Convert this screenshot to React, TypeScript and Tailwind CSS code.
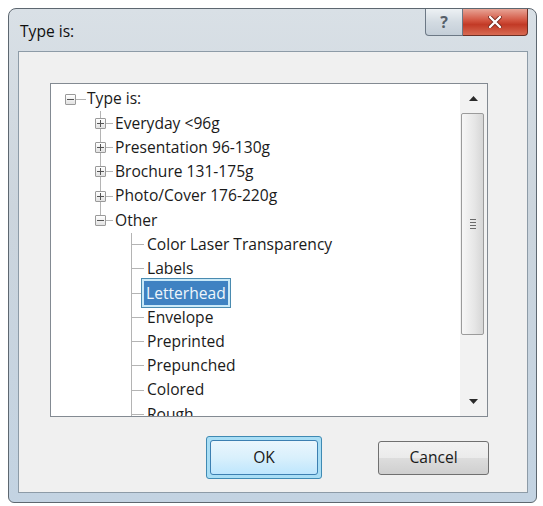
import React from 'react';

/** Tree rows under "Type is:", in display order. */
const PAPER_GROUPS = [
  'Everyday <96g',
  'Presentation 96-130g',
  'Brochure 131-175g',
  'Photo/Cover 176-220g',
];

const OTHER_TYPES = [
  'Color Laser Transparency',
  'Labels',
  'Letterhead',
  'Envelope',
  'Preprinted',
  'Prepunched',
  'Colored',
  'Rough',
];

const SELECTED = 'Letterhead';

function ExpandBox({ open }: { open: boolean }) {
  return (
    <span className="relative z-10 flex h-[11px] w-[11px] items-center justify-center rounded-[1px] border border-[#9a9a9a] bg-[linear-gradient(to_bottom,#ffffff,#e2e2e2)]">
      <svg width="7" height="7" viewBox="0 0 7 7">
        <rect x="0" y="3" width="7" height="1" fill="#555" />
        {!open && <rect x="3" y="0" width="1" height="7" fill="#555" />}
      </svg>
    </span>
  );
}

function GroupRow({ label, open, last }: { label: string; open: boolean; last: boolean }) {
  return (
    <div className="flex h-[24.25px] items-center">
      <div className="w-[44px] shrink-0" />
      <div className="relative flex h-full w-[11px] shrink-0 items-center">
        <div className={`absolute left-[5px] top-0 w-px bg-[#b4b4b4] ${last ? 'h-1/2' : 'h-full'}`} />
        <ExpandBox open={open} />
      </div>
      <div className="h-px w-[7px] bg-[#b4b4b4]" />
      <span className="ml-[2px]">{label}</span>
    </div>
  );
}

function LeafRow({ label }: { label: string }) {
  const selected = label === SELECTED;
  return (
    <div className="flex h-[24.25px] items-center">
      <div className="w-[80px] shrink-0" />
      <div className="h-full w-px shrink-0 bg-[#b4b4b4]" />
      <div className="h-px w-[12px] shrink-0 bg-[#b4b4b4]" />
      {selected ? (
        <span className="-ml-[3px] border border-[#4a8bb0] bg-[#c9e9f8] p-[2px]">
          <span className="block bg-[#3f82c2] px-[2px] py-[2px] leading-[20px] text-[#eef5fb]">
            {label}
          </span>
        </span>
      ) : (
        <span className="ml-[3px]">{label}</span>
      )}
    </div>
  );
}

function ScrollBar() {
  return (
    <div className="flex w-[27px] shrink-0 flex-col bg-[#f2f2f2]">
      <div className="flex h-[29px] items-center justify-center">
        <svg width="9" height="5" viewBox="0 0 9 5">
          <path d="M0 5 L4.5 0 L9 5 Z" fill="#2a2a2a" />
        </svg>
      </div>
      <div className="mx-[1px] flex h-[222px] w-[23px] items-center justify-center rounded-[2px] border border-[#9b9b9b] bg-[linear-gradient(to_right,#f7f7f7,#e6e6e6_60%,#d6d6d6)]">
        <div className="flex flex-col gap-[2px]">
          <div className="h-px w-[6px] bg-[#6a6a6a]" />
          <div className="h-px w-[6px] bg-[#6a6a6a]" />
          <div className="h-px w-[6px] bg-[#6a6a6a]" />
          <div className="h-px w-[6px] bg-[#6a6a6a]" />
        </div>
      </div>
      <div className="flex-1" />
      <div className="flex h-[29px] items-center justify-center">
        <svg width="9" height="5" viewBox="0 0 9 5">
          <path d="M0 0 L4.5 5 L9 0 Z" fill="#2a2a2a" />
        </svg>
      </div>
    </div>
  );
}

export default function App() {
  return (
    <div
      className="h-[506px] w-[543px] overflow-hidden bg-white pl-[8px] pt-[8px] text-[15.6px] text-[#1a1a1a]"
      style={{ fontFamily: '"Open Sans", "Noto Sans", sans-serif' }}
    >
      <div className="flex h-[495px] w-[529px] flex-col rounded-t-[8px] rounded-b-[6px] border border-[#5d6770] bg-[linear-gradient(to_bottom,#d9e0e6,#ccd5dd_40%,#c3d3e2)]">
        {/* Title bar */}
        <div className="flex h-[42px] shrink-0 items-start justify-between">
          <span className="pl-[11px] pt-[11px] text-[15.6px] text-[#101010]">Type is:</span>
          <div className="mr-[8px] flex h-[27px]">
            <div className="flex w-[38px] items-center justify-center rounded-bl-[4px] border border-t-0 border-[#6c7885] bg-[linear-gradient(to_bottom,#edf1f4,#d3dbe2_50%,#c4ced8)]">
              <span className="text-[16px] font-bold leading-none text-[#56606a]">?</span>
            </div>
            <div className="flex w-[65px] items-center justify-center rounded-br-[4px] border border-l-0 border-t-0 border-[#6b2f25] bg-[linear-gradient(to_bottom,#e8a496,#d2533f_45%,#c23a26_60%,#d86a52)]">
              <svg width="14" height="12" viewBox="0 0 14 12">
                <path d="M2 1 L12 11 M12 1 L2 11" stroke="#7a2a1e" strokeWidth="4" strokeLinecap="round" />
                <path d="M2 1 L12 11 M12 1 L2 11" stroke="#ffffff" strokeWidth="2.4" strokeLinecap="round" />
              </svg>
            </div>
          </div>
        </div>

        {/* Client area */}
        <div className="mb-[9px] ml-[9px] mr-[8px] flex flex-1 flex-col border border-[#8d9ba7] bg-[#f0f0f0]">
          <div className="ml-[31px] mt-[31px] flex h-[334px] w-[438px] border border-[#838a92] bg-white">
            <div className="flex-1 overflow-hidden pt-[3px]">
              <div className="flex h-[24.25px] items-center">
                <div className="w-[14px] shrink-0" />
                <ExpandBox open />
                <div className="h-px w-[10px] bg-[#b4b4b4]" />
                <span className="ml-[1px]">Type is:</span>
              </div>
              {PAPER_GROUPS.map((g) => (
                <GroupRow key={g} label={g} open={false} last={false} />
              ))}
              <GroupRow label="Other" open last />
              {OTHER_TYPES.map((t) => (
                <LeafRow key={t} label={t} />
              ))}
            </div>
            <ScrollBar />
          </div>

          <div className="mt-[19px] flex items-center">
            <div className="ml-[187px] flex h-[43px] w-[116px] items-center justify-center rounded-[3px] border border-[#3f8ab3] bg-[#a9def5] p-[3px]">
              <div className="flex h-full w-full items-center justify-center rounded-[3px] border border-[#3c7fb1] bg-[linear-gradient(to_bottom,#eaf6fd,#d9f0fc_50%,#bee6fd)]">
                OK
              </div>
            </div>
            <div className="ml-[56px] flex h-[34px] w-[111px] items-center justify-center rounded-[3px] border border-[#707070] bg-[linear-gradient(to_bottom,#f2f2f2,#ebebeb_50%,#dddddd_51%,#cfcfcf)]">
              Cancel
            </div>
          </div>
        </div>
      </div>
    </div>
  );
}
